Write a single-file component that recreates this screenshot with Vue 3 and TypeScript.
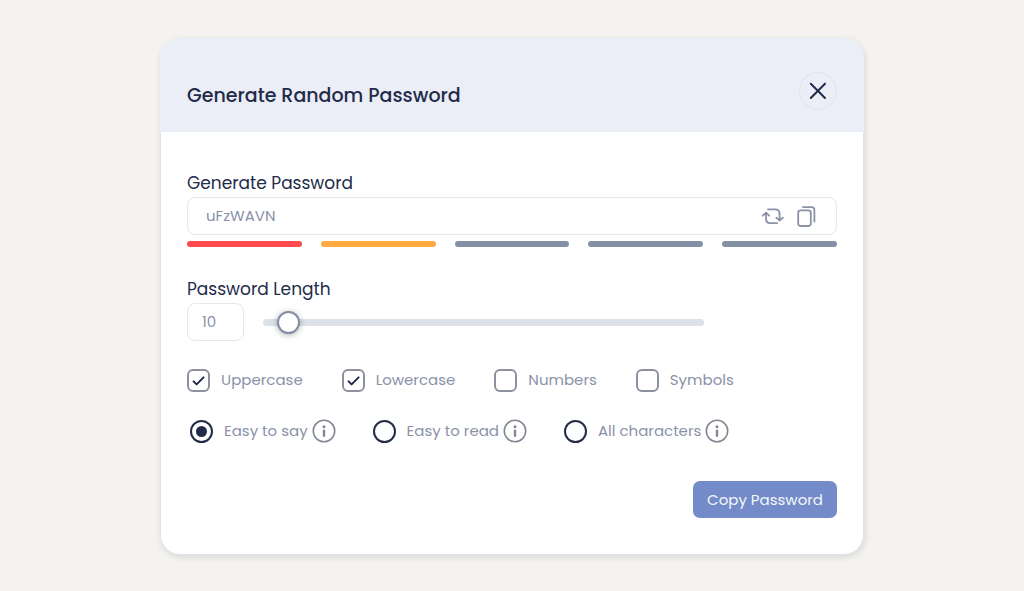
<script setup lang="ts">
import { ref } from 'vue'

interface Option {
  id: string
  label: string
}

const password = ref<string>('uFzWAVN')
const length = ref<number>(10)

const levels: string[] = ['weak', 'fair', 'off', 'off', 'off']

const charsets: Option[] = [
  { id: 'uppercase', label: 'Uppercase' },
  { id: 'lowercase', label: 'Lowercase' },
  { id: 'numbers', label: 'Numbers' },
  { id: 'symbols', label: 'Symbols' },
]
const selected = ref<string[]>(['uppercase', 'lowercase'])

const modes: Option[] = [
  { id: 'say', label: 'Easy to say' },
  { id: 'read', label: 'Easy to read' },
  { id: 'all', label: 'All characters' },
]
const mode = ref<string>('say')

function regenerate(): void {
  const sets: Record<string, string> = {
    uppercase: 'ABCDEFGHIJKLMNOPQRSTUVWXYZ',
    lowercase: 'abcdefghijklmnopqrstuvwxyz',
    numbers: '0123456789',
    symbols: '!@#$%^&*-_=+?',
  }
  const pool = selected.value.map((id) => sets[id]).join('')
  if (!pool) return
  let next = ''
  for (let i = 0; i < length.value; i++) {
    next += pool[Math.floor(Math.random() * pool.length)]
  }
  password.value = next
}

function copy(): void {
  void navigator.clipboard?.writeText(password.value)
}
</script>

<template>
  <main class="page">
    <form class="card" @submit.prevent="copy">
      <header class="header">
        <h1 class="title">Generate Random Password</h1>
        <button type="button" class="close" aria-label="Close">
          <svg viewBox="0 0 18 18" width="18" height="18" aria-hidden="true">
            <path d="M1.8 1.8 16 16M16 1.8 1.8 16" />
          </svg>
        </button>
      </header>

      <div class="body">
        <label class="label" for="password">Generate Password</label>
        <div class="field">
          <input id="password" v-model="password" class="text" type="text" />
          <button type="button" class="icon" aria-label="Regenerate" @click="regenerate">
            <svg viewBox="0 0 24 24" width="24" height="24" aria-hidden="true">
              <path d="M2.8 11.7 6 8.7 9.2 11.7M6 9.2V14.6Q6 19.2 10.2 19.2H17.2" />
              <path d="M16.3 13.6 19.6 16.6 22.9 13.6M19.6 16V10Q19.6 5.3 15.4 5.3H8" />
            </svg>
          </button>
          <button type="button" class="icon" aria-label="Copy" @click="copy">
            <svg viewBox="0 0 24 24" width="24" height="24" aria-hidden="true">
              <rect x="4.2" y="6.3" width="12.6" height="15.7" rx="2.4" />
              <path d="M9 3.1H17.6Q20.4 3.1 20.4 5.9V17.6" />
            </svg>
          </button>
        </div>
        <div class="meter" role="img" aria-label="Password strength">
          <span v-for="(level, i) in levels" :key="i" class="level" :class="level"></span>
        </div>

        <label class="label length-label" for="length">Password Length</label>
        <div class="length-row">
          <input id="length" v-model="length" class="number" type="text" inputmode="numeric" />
          <input
            v-model.number="length"
            class="slider"
            type="range"
            min="6"
            max="128"
            aria-label="Password length slider"
          />
        </div>

        <div class="checks">
          <label v-for="item in charsets" :key="item.id" class="choice">
            <span class="tick">
              <input v-model="selected" type="checkbox" class="box" :value="item.id" />
              <svg class="mark" viewBox="0 0 23 23" width="23" height="23" aria-hidden="true">
                <path d="M6.6 12.4 9.6 15.4 16.6 8.4" />
              </svg>
            </span>
            <span class="caption">{{ item.label }}</span>
          </label>
        </div>

        <div class="modes">
          <div v-for="item in modes" :key="item.id" class="mode">
            <label class="choice">
              <input v-model="mode" type="radio" name="mode" class="dot" :value="item.id" />
              <span class="caption">{{ item.label }}</span>
            </label>
            <button type="button" class="info" :aria-label="`About ${item.label}`">
              <svg viewBox="0 0 24 24" width="24" height="24" aria-hidden="true">
                <circle class="ring" cx="12" cy="12" r="10.7" />
                <circle class="point" cx="12" cy="7.8" r="1.5" />
                <path d="M12 11.6V16.8" />
              </svg>
            </button>
          </div>
        </div>

        <footer class="footer">
          <button type="submit" class="primary">Copy Password</button>
        </footer>
      </div>
    </form>
  </main>
</template>

<style>
body {
  background: #f5f3ef;
}
</style>

<style scoped>
.page {
  box-sizing: border-box;
  min-height: 100vh;
  padding: 38px 24px 35px;
  background: #f5f3ef;
  color: #222b4a;
  font-family: Poppins, Inter, 'Liberation Sans', sans-serif;
}

.page *,
.page *::before {
  box-sizing: border-box;
}

button,
input {
  font: inherit;
  margin: 0;
}

button {
  padding: 0;
  border: 0;
  background: none;
  color: inherit;
  cursor: pointer;
}

svg {
  display: block;
  fill: none;
  stroke: currentColor;
  stroke-linecap: round;
  stroke-linejoin: round;
}

.card {
  max-width: 704px;
  margin: 0 auto;
  border-radius: 20px;
  background: #fff;
  box-shadow: inset 0 0 0 1px #dde1f0, 1px 2px 6px rgba(40, 40, 60, 0.14);
}

.header {
  display: flex;
  align-items: flex-start;
  justify-content: space-between;
  padding: 34px 27px 22px;
  border-radius: 20px 20px 0 0;
  background: #eceef7;
}

.title {
  margin: 10px 0 0;
  font-size: 19px;
  line-height: 28px;
  font-weight: 500;
}

.close {
  display: grid;
  place-items: center;
  width: 38px;
  height: 38px;
  border: 1px solid #e0e3ea;
  border-radius: 50%;
}

.close svg {
  stroke-width: 2;
}

.body {
  padding: 39px 27px 37px;
}

.label {
  display: block;
  font-size: 17px;
  line-height: 24px;
}

.field {
  display: flex;
  align-items: center;
  gap: 10px;
  height: 38px;
  margin-top: 2px;
  padding: 0 18px;
  border: 1px solid #e3e9ee;
  border-radius: 8px;
  color: #8a91a9;
}

.text {
  flex: 1;
  min-width: 0;
  height: 22px;
  padding: 0 0 2px;
  border: 0;
  outline: 0;
  background: transparent;
  color: inherit;
  font-size: 15px;
}

.icon svg {
  stroke-width: 1.8;
}

.meter {
  display: flex;
  gap: 19px;
  margin-top: 6px;
}

.level {
  flex: 1;
  height: 6px;
  border-radius: 3px;
  background: #8690a5;
}

.level.weak {
  background: #ff4c4f;
}

.level.fair {
  background: #ffab41;
}

.length-label {
  margin-top: 30px;
}

.length-row {
  display: flex;
  align-items: center;
  gap: 19px;
  margin-top: 2px;
  padding-right: 133px;
}

.number {
  width: 57px;
  height: 38px;
  padding: 0 14px 2px;
  border: 1px solid #e3e9ee;
  border-radius: 8px;
  background: #fff;
  color: #8a91a9;
  font-size: 15px;
}

.slider {
  flex: 1;
  min-width: 0;
  height: 23px;
  appearance: none;
  background: transparent;
}

.slider::-webkit-slider-runnable-track {
  height: 7px;
  border-radius: 4px;
  background: #dce2e7;
}

.slider::-webkit-slider-thumb {
  appearance: none;
  box-sizing: border-box;
  width: 23px;
  height: 23px;
  margin-top: -8px;
  border: 2px solid #868da5;
  border-radius: 50%;
  background: #fff;
  box-shadow: 0 1px 6px rgba(0, 0, 0, 0.3);
}

.checks {
  display: flex;
  flex-wrap: wrap;
  gap: 12px 39px;
  margin-top: 28px;
}

.choice {
  display: flex;
  align-items: center;
  gap: 11px;
  color: #8a91a9;
  font-size: 15px;
  line-height: 21px;
  white-space: nowrap;
}

.caption {
  padding-bottom: 2px;
}

.tick {
  display: grid;
}

.box,
.mark {
  grid-area: 1 / 1;
}

.box {
  appearance: none;
  width: 23px;
  height: 23px;
  border: 2px solid #8c909f;
  border-radius: 6px;
  background: #fff;
}

.mark {
  visibility: hidden;
  color: #222b4a;
  stroke-width: 2;
  pointer-events: none;
}

.box:checked + .mark {
  visibility: visible;
}

.modes {
  display: flex;
  flex-wrap: wrap;
  gap: 12px 37px;
  margin-top: 27px;
  padding-left: 3px;
}

.mode {
  display: flex;
  align-items: center;
  gap: 4px;
}

.dot {
  display: grid;
  place-items: center;
  appearance: none;
  width: 23px;
  height: 23px;
  border: 2px solid #222b4a;
  border-radius: 50%;
  background: #fff;
}

.dot:checked::before {
  content: '';
  width: 11px;
  height: 11px;
  border-radius: 50%;
  background: #222b4a;
}

.info {
  color: #858995;
}

.info svg {
  stroke-width: 2.4;
}

.info .ring {
  stroke-width: 1.6;
}

.info .point {
  fill: currentColor;
  stroke: none;
}

.footer {
  display: flex;
  justify-content: flex-end;
  margin-top: 38px;
}

.primary {
  height: 37px;
  padding: 0 14px;
  border-radius: 7px;
  background: #738bc8;
  color: #f4f6fc;
  font-size: 15px;
}
</style>
